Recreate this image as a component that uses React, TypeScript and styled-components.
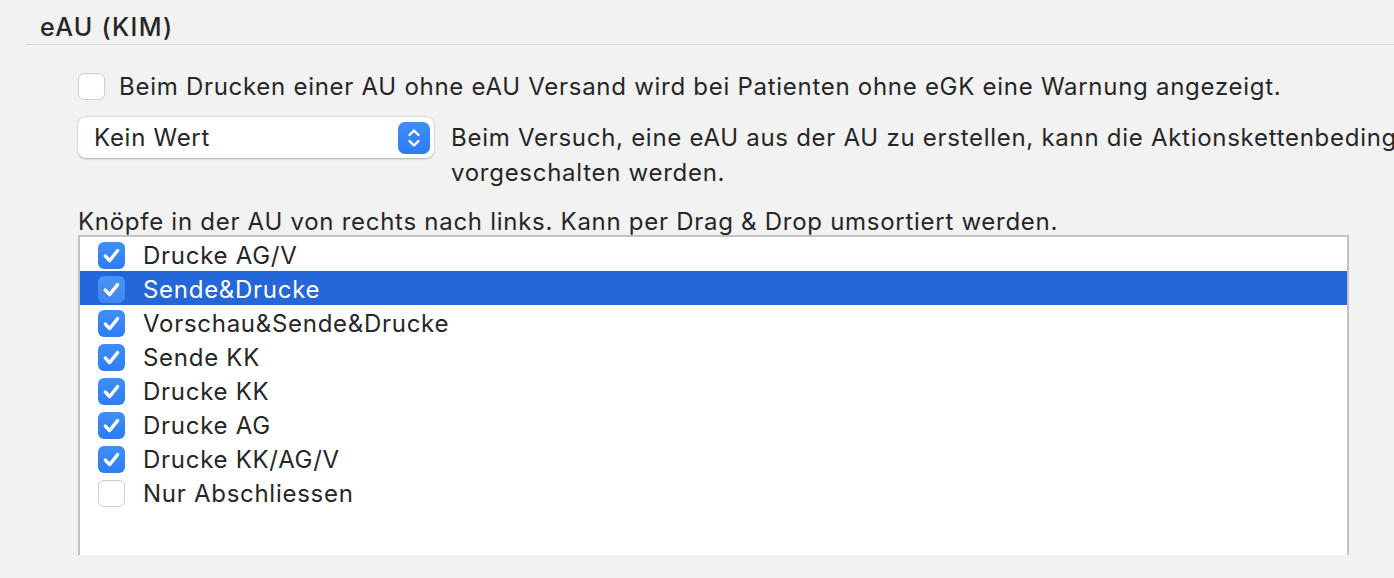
import React from "react";
import styled, { createGlobalStyle } from "styled-components";

const Global = createGlobalStyle`
  html, body { margin: 0; padding: 0; background: #f2f2f2; }
  body { overflow: hidden; width: 1394px; height: 578px; font-family: Inter, "Noto Sans", sans-serif; color: #262626; }
`;

const Page = styled.div`
  width: 1394px;
  height: 578px;
  overflow: hidden;
  background: #f2f2f2;
`;

const Header = styled.div`
  margin-left: 26px;
  height: 45px;
  border-bottom: 1px solid #d7d7d7;
  box-sizing: border-box;
  display: flex;
  align-items: flex-end;
  padding-left: 14px;
  padding-bottom: 1px;
`;

const Title = styled.h2`
  margin: 0;
  font-size: 25px;
  font-weight: 500;
  line-height: 32px;
  letter-spacing: 1.3px;
  color: #262626;
`;

const Body = styled.div`
  padding-left: 78px;
  display: flex;
  flex-direction: column;
  font-size: 24px;
  letter-spacing: 0.72px;
`;

const CheckRow = styled.label`
  margin-top: 27px;
  display: flex;
  align-items: center;
  gap: 14px;
  height: 28px;
  white-space: nowrap;
`;

const Box = styled.span<{ $checked?: boolean; $dim?: boolean }>`
  flex: none;
  width: 27px;
  height: 27px;
  border-radius: 6px;
  box-sizing: border-box;
  display: flex;
  align-items: center;
  justify-content: center;
  background: ${(p) =>
    p.$checked
      ? p.$dim
        ? "linear-gradient(#4a93f5, #3f86ee)"
        : "linear-gradient(#3d8ff9, #2f7cf4)"
      : "#ffffff"};
  border: ${(p) => (p.$checked ? "none" : "1px solid #d0d0d0")};
  box-shadow: ${(p) => (p.$checked ? "none" : "inset 0 1px 1px rgba(0,0,0,0.04)")};
`;

const SelectRow = styled.div`
  margin-top: 17px;
  display: flex;
  align-items: flex-start;
  gap: 17px;
`;

const Select = styled.div`
  flex: none;
  width: 356px;
  height: 41px;
  border-radius: 8px;
  background: #ffffff;
  box-shadow: 0 0.5px 2px rgba(0, 0, 0, 0.28), 0 0 0 0.5px rgba(0, 0, 0, 0.06);
  display: flex;
  align-items: center;
  justify-content: space-between;
  padding: 0 4px 0 16px;
  box-sizing: border-box;
`;

const Stepper = styled.span`
  width: 32px;
  height: 32px;
  border-radius: 7px;
  background: linear-gradient(#3e90fa, #2e7bf3);
  display: flex;
  align-items: center;
  justify-content: center;
`;

const Desc = styled.p`
  flex: none;
  margin: 3px 0 0 0;
  width: 1000px;
  line-height: 35px;
`;

const Label = styled.div`
  margin-top: 19px;
  line-height: 26px;
  white-space: nowrap;
`;

const List = styled.div`
  width: 1271px;
  height: 320px;
  box-sizing: border-box;
  border: 2px solid #c3c3c3;
  border-bottom: none;
  background: #ffffff;
`;

const Item = styled.div<{ $selected?: boolean }>`
  height: 34px;
  display: flex;
  align-items: center;
  gap: 18px;
  padding-left: 18px;
  padding-top: 2px;
  box-sizing: border-box;
  background: ${(p) => (p.$selected ? "#2367da" : "transparent")};
  color: ${(p) => (p.$selected ? "#ffffff" : "#262626")};
`;

const Check = () => (
  <svg width="27" height="27" viewBox="0 0 27 27">
    <path d="M7.3 14 L11.6 18.6 L19.6 8.6" fill="none" stroke="#fff" strokeWidth="3.3" strokeLinecap="round" strokeLinejoin="round" />
  </svg>
);

const Chevrons = () => (
  <svg width="32" height="32" viewBox="0 0 32 32">
    <path d="M11.5 13 L16 8.5 L20.5 13" fill="none" stroke="#fff" strokeWidth="2.4" strokeLinecap="round" strokeLinejoin="round" />
    <path d="M11.5 19 L16 23.5 L20.5 19" fill="none" stroke="#fff" strokeWidth="2.4" strokeLinecap="round" strokeLinejoin="round" />
  </svg>
);

const items: { text: string; checked: boolean }[] = [
  { text: "Drucke AG/V", checked: true },
  { text: "Sende&Drucke", checked: true },
  { text: "Vorschau&Sende&Drucke", checked: true },
  { text: "Sende KK", checked: true },
  { text: "Drucke KK", checked: true },
  { text: "Drucke AG", checked: true },
  { text: "Drucke KK/AG/V", checked: true },
  { text: "Nur Abschliessen", checked: false },
];

export default function App() {
  return (
    <Page>
      <Global />
      <Header>
        <Title>eAU (KIM)</Title>
      </Header>
      <Body>
        <CheckRow>
          <Box />
          Beim Drucken einer AU ohne eAU Versand wird bei Patienten ohne eGK eine Warnung angezeigt.
        </CheckRow>
        <SelectRow>
          <Select>
            Kein Wert
            <Stepper>
              <Chevrons />
            </Stepper>
          </Select>
          <Desc>
            Beim Versuch, eine eAU aus der AU zu erstellen, kann die Aktionskettenbedingung vorgeschalten werden.
          </Desc>
        </SelectRow>
        <Label>Knöpfe in der AU von rechts nach links. Kann per Drag &amp; Drop umsortiert werden.</Label>
        <List>
          {items.map((it, i) => (
            <Item key={it.text} $selected={i === 1}>
              <Box $checked={it.checked} $dim={i === 1}>
                {it.checked && <Check />}
              </Box>
              {it.text}
            </Item>
          ))}
        </List>
      </Body>
    </Page>
  );
}
